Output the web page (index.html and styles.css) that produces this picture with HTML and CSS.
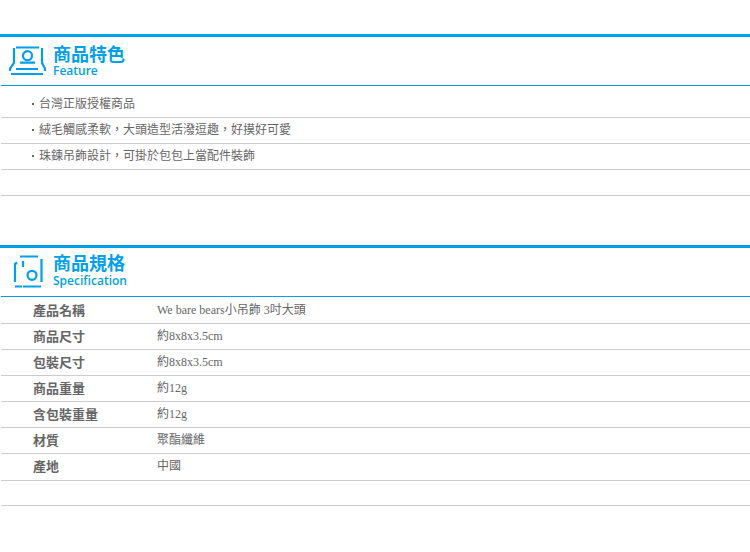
FILE: index.html
```html
<!DOCTYPE html>
<html lang="zh-Hant">
<head>
<meta charset="utf-8">
<title>商品</title>
<link rel="stylesheet" href="styles.css">
</head>
<body>
<section class="section section-feature">
  <header class="head">
    <svg class="icon" width="38" height="32" viewBox="0 0 38 32" fill="none" stroke="#009fe8" stroke-width="2.200">
      <path d="M7 2.500H30M5 3V18L1 23.500V26M33 3V18L36 23.500V26M11 17.700H26M7 24H29M2 29H34"/>
      <circle cx="18.500" cy="10.700" r="4.500"/>
    </svg>
    <div class="titles"><h2 class="title">商品特色</h2><p class="sub">Feature</p></div>
  </header>
  <ul class="list">
    <li class="item">台灣正版授權商品</li>
    <li class="item">絨毛觸感柔軟，大頭造型活潑逗趣，好摸好可愛</li>
    <li class="item">珠鍊吊飾設計，可掛於包包上當配件裝飾</li>
    <li class="item empty"></li>
  </ul>
</section>
<section class="section section-spec">
  <header class="head">
    <svg class="icon" width="38" height="34" viewBox="0 0 38 34" fill="none" stroke="#009fe8" stroke-width="2.200">
      <path d="M11 1.500H29M32.500 4V27M14 31.500H32M6 31.500H13M6 27V9L8 7.500M14 6V12"/>
      <circle cx="23" cy="20.300" r="4.500"/>
    </svg>
    <div class="titles"><h2 class="title">商品規格</h2><p class="sub">Specification</p></div>
  </header>
  <dl class="specs">
    <div class="row"><dt class="label">產品名稱</dt><dd class="value">We bare bears小吊飾 3吋大頭</dd></div>
    <div class="row"><dt class="label">商品尺寸</dt><dd class="value">約8x8x3.5cm</dd></div>
    <div class="row"><dt class="label">包裝尺寸</dt><dd class="value">約8x8x3.5cm</dd></div>
    <div class="row"><dt class="label">商品重量</dt><dd class="value">約12g</dd></div>
    <div class="row"><dt class="label">含包裝重量</dt><dd class="value">約12g</dd></div>
    <div class="row"><dt class="label">材質</dt><dd class="value">聚酯纖維</dd></div>
    <div class="row row-tall"><dt class="label">產地</dt><dd class="value">中國</dd></div>
    <div class="row row-short"></div>
  </dl>
</section>
</body>
</html>
```
FILE: styles.css
```css
* { box-sizing: border-box; }
html, body { margin: 0; padding: 0; background: #fff; }
body {
  padding-top: 34px;
  font-family: "Liberation Serif", "Noto Sans CJK TC", serif;
  color: #666;
}
.section { border-top: 3px solid #009fe8; }
.section-spec { margin-top: 49px; }
.head {
  display: flex;
  align-items: center;
  gap: 6px;
  height: 49px;
  margin-left: 1px;
  padding-left: 8px;
  border-bottom: 1px solid #009fe8;
}
.icon { flex: none; }
.titles {
  display: flex;
  flex-direction: column;
  align-self: flex-start;
  padding-top: 6px;
  gap: 1px;
}
.section-spec .titles { padding-top: 4px; gap: 2px; }
.title {
  margin: 0;
  font: 700 18px/20px "Noto Sans CJK TC", sans-serif;
  color: #009fe8;
}
.sub {
  margin: 0;
  font: 600 12px/14px "Open Sans", sans-serif;
  color: #009fe8;
}
.list { margin: 0 0 0 1px; padding: 6px 0 0; list-style: none; }
.specs { margin: 0 0 0 1px; padding: 1px 0 0; }
.item, .row {
  height: 26px;
  border-bottom: 1px solid #ccc;
}
.item {
  padding-left: 38px;
  position: relative;
  font: 400 12px/21px "Noto Sans CJK TC", sans-serif;
}
.item:not(.empty)::before {
  content: "";
  position: absolute;
  left: 31px;
  top: 11px;
  width: 2px;
  height: 2px;
  background: #666;
}
.row { display: flex; align-items: center; padding: 0 0 2px 32px; }
.row-tall { height: 27px; padding-bottom: 3px; }
.row-short { height: 25px; }
.label {
  width: 124px;
  font: 700 13px/1 "Noto Sans CJK TC", sans-serif;
  color: #666;
}
.value {
  margin: 0;
  font-size: 12px;
  font-weight: 400;
  line-height: 1;
}
```
